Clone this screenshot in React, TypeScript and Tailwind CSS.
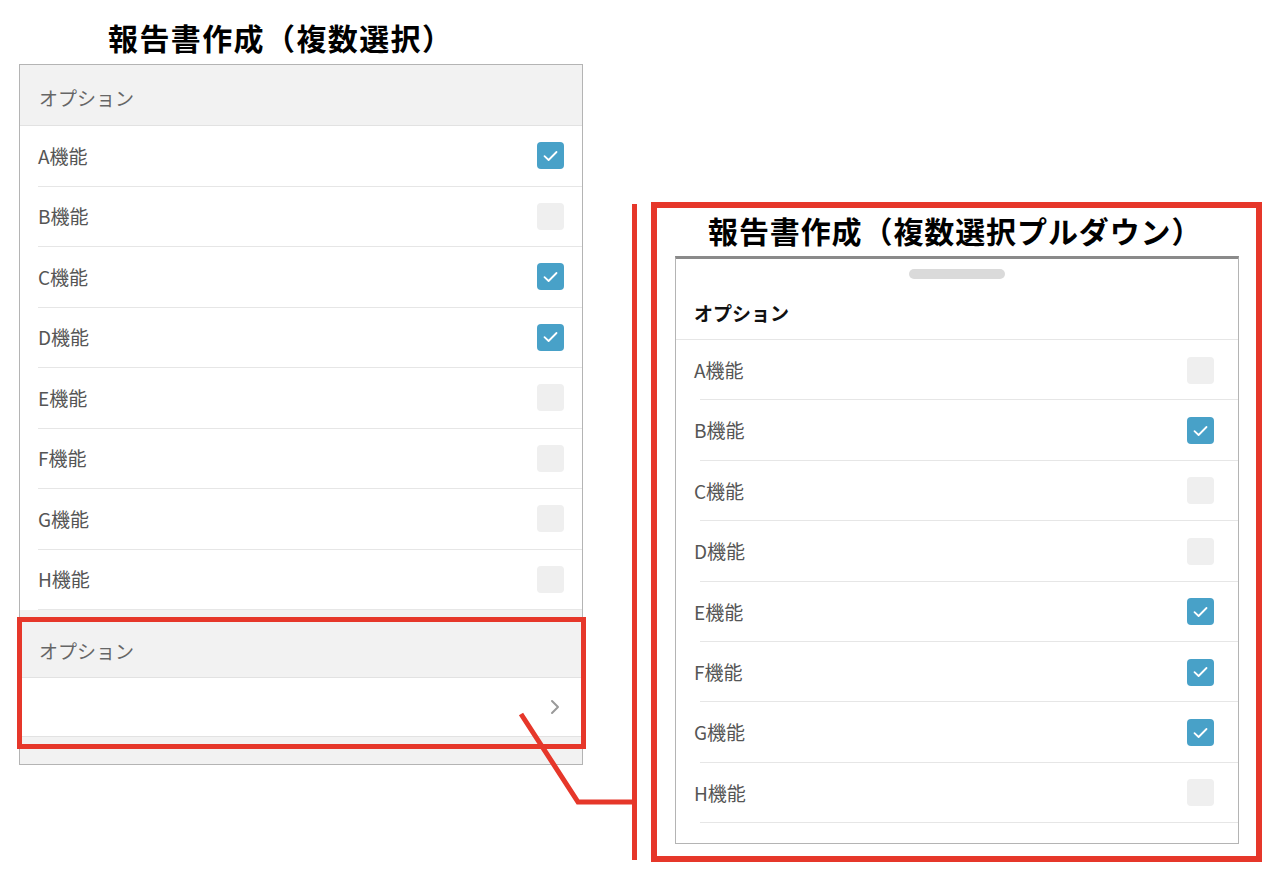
import React from 'react';

const FONT = { fontFamily: '"Noto Sans CJK JP", "Noto Sans", sans-serif' };

const LEFT_ITEMS = [
  { label: 'A機能', checked: true },
  { label: 'B機能', checked: false },
  { label: 'C機能', checked: true },
  { label: 'D機能', checked: true },
  { label: 'E機能', checked: false },
  { label: 'F機能', checked: false },
  { label: 'G機能', checked: false },
  { label: 'H機能', checked: false },
];

const RIGHT_ITEMS = [
  { label: 'A機能', checked: false },
  { label: 'B機能', checked: true },
  { label: 'C機能', checked: false },
  { label: 'D機能', checked: false },
  { label: 'E機能', checked: true },
  { label: 'F機能', checked: true },
  { label: 'G機能', checked: true },
  { label: 'H機能', checked: false },
];

function Check({ checked }: { checked: boolean }) {
  if (!checked) return <span className="block w-[27px] h-[27px] rounded-[4px] bg-[#efefef]" />;
  return (
    <span className="flex items-center justify-center w-[27px] h-[27px] rounded-[4px] bg-[#48a1c8]">
      <svg width="15" height="12" viewBox="0 0 15 12" fill="none">
        <path d="M1.5 6.2 L5.6 10 L13.5 2" stroke="#fff" strokeWidth="1.8" strokeLinecap="round" strokeLinejoin="round" />
      </svg>
    </span>
  );
}

function Row({ label, checked }: { label: string; checked: boolean }) {
  return (
    <div className="ml-[18px] h-[60.5px] flex items-center justify-between pr-[18px] border-b border-[#e6e6e6]">
      <span className="text-[19px] text-[#555]">{label}</span>
      <Check checked={checked} />
    </div>
  );
}

export default function App() {
  return (
    <div className="relative w-[1282px] h-[880px] bg-white overflow-hidden" style={FONT}>
      <div className="flex items-start pl-[19px]">
        {/* left: plain multi select */}
        <div className="w-[564px] flex flex-col">
          <h1 className="h-[64px] flex items-center pl-[89px] pt-[10px] text-[30px] font-bold text-black tracking-[1.4px]">
            報告書作成（複数選択）
          </h1>
          <div className="border border-[#b4b4b4] bg-[#f2f2f2]">
            <div className="h-[61px] flex items-center pl-[19px] pt-[7px] text-[19px] text-[#666] border-b border-[#e2e2e2]">
              オプション
            </div>
            <div className="bg-white">
              {LEFT_ITEMS.map((it) => (
                <Row key={it.label} {...it} />
              ))}
            </div>
            <div className="h-[68px] pt-[16px] flex items-center pl-[19px] text-[19px] text-[#666] border-b border-[#e2e2e2]">
              オプション
            </div>
            <div className="h-[59px] bg-white flex items-center justify-end pr-[22px] border-b border-[#e2e2e2]">
              <svg width="10" height="16" viewBox="0 0 10 16" fill="none">
                <path d="M2 2 L8 8 L2 14" stroke="#9a9a9a" strokeWidth="2" strokeLinecap="round" strokeLinejoin="round" />
              </svg>
            </div>
            <div className="h-[27px]" />
          </div>
        </div>

        {/* right: pulldown sheet */}
        <div className="ml-[68px] mt-[202px] w-[611px] h-[660px] border-[6px] border-[#e6372a] flex flex-col">
          <h2 className="h-[48px] flex items-center pl-[51px] pb-[4px] text-[30px] font-bold text-black tracking-[0.9px]">
            報告書作成（複数選択プルダウン）
          </h2>
          <div className="ml-[18px] w-[564px] h-[588px] border border-[#b4b4b4] border-t-[3px] border-t-[#8a8a8a] bg-white flex flex-col">
            <div className="flex justify-center pt-[10px]">
              <span className="block w-[96px] h-[10px] rounded-full bg-[#dadada]" />
            </div>
            <div className="h-[61px] flex items-center pl-[18px] pt-[8px] text-[19px] font-bold text-[#111] border-b border-[#e6e6e6]">
              オプション
            </div>
            {RIGHT_ITEMS.map((it) => (
              <div key={it.label} className="h-[60.4px] flex items-center justify-between pl-[18px] pr-[24px] relative">
                <span className="text-[19px] text-[#555]">{it.label}</span>
                <Check checked={it.checked} />
                <span className="absolute left-[24px] right-0 bottom-0 h-px bg-[#e6e6e6]" />
              </div>
            ))}
          </div>
        </div>
      </div>

      {/* annotation: highlight box + connector */}
      <div className="absolute left-[17px] top-[617px] w-[569px] h-[132px] border-[5px] border-[#e6372a]" />
      <svg className="absolute left-0 top-0 pointer-events-none" width="1282" height="880">
        <polyline points="521,714 578,802 634,802" fill="none" stroke="#e6372a" strokeWidth="5" strokeLinejoin="miter" />
        <line x1="634.5" y1="204" x2="634.5" y2="860" stroke="#e6372a" strokeWidth="5" />
      </svg>
    </div>
  );
}
